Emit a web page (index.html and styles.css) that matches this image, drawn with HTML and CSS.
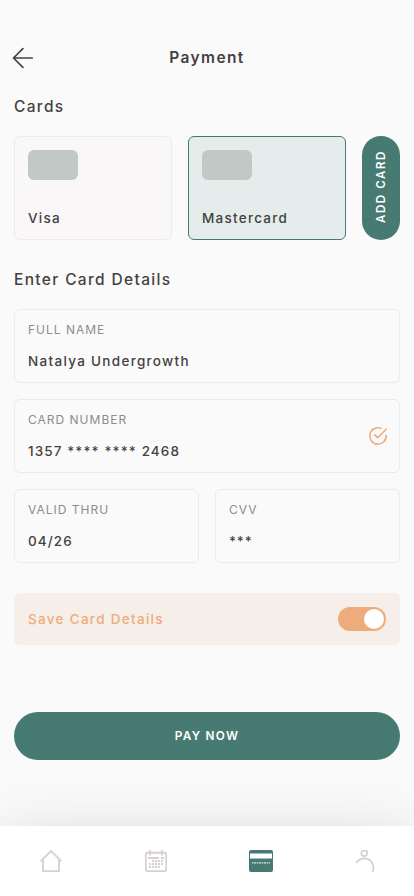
FILE: index.html
```html
<!DOCTYPE html>
<html lang="en">
<head>
<meta charset="utf-8">
<meta name="viewport" content="width=device-width, initial-scale=1">
<title>Payment</title>
<link rel="stylesheet" href="styles.css">
</head>
<body>
<div class="screen">
  <header class="header">
    <svg class="back" width="22" height="22" viewBox="0 0 22 22"><path d="M20.200 11H1.500M10.900 1.700L1.500 11l9.400 9.400"/></svg>
    <h1 class="title">Payment</h1>
  </header>
  <main class="content">
    <h2 class="heading">Cards</h2>
    <div class="cards">
      <div class="card"><span class="chip"></span><span class="card-name">Visa</span></div>
      <div class="card card-active"><span class="chip"></span><span class="card-name">Mastercard</span></div>
      <button class="add"><span class="add-text">ADD CARD</span></button>
    </div>
    <h2 class="heading details">Enter Card Details</h2>
    <div class="fields">
      <div class="field wide"><span class="label">FULL NAME</span><span class="value">Natalya Undergrowth</span></div>
      <div class="field wide">
        <span class="label">CARD NUMBER</span><span class="value number">1357 **** **** 2468</span>
        <svg class="check" width="20" height="20" viewBox="0 0 20 20"><path d="M12.900 2.300A8.200 8.200 0 1 0 18.200 9.300M6.600 8.800l3 2.900 8.600-8.400"/></svg>
      </div>
      <div class="field"><span class="label">VALID THRU</span><span class="value number">04/26</span></div>
      <div class="field"><span class="label">CVV</span><span class="value cvv">***</span></div>
    </div>
    <div class="save"><span class="save-text">Save Card Details</span><span class="toggle"><span class="knob"></span></span></div>
    <button class="pay">PAY NOW</button>
  </main>
  <nav class="nav">
    <svg class="icon" width="22" height="22" viewBox="0 0 22 22"><path d="M.6 11.300L11 .9l10.400 10.400M3 9.500v11.700h16V9.500"/></svg>
    <svg class="icon calendar" width="22" height="22" viewBox="0 0 22 22"><rect x=".75" y="2.750" width="20.500" height="18.500" rx="2"/><path d="M5 0v5.500M17 0v5.500M3 8h11M16 8h3"/><path class="dots" d="M7 11h12M4 14h15M4 17h12"/></svg>
    <svg class="icon" width="24" height="22" viewBox="0 0 24 22"><rect class="solid" width="24" height="22" rx="2"/><path class="stripe" d="M1 3.500h22v5H1z"/><path class="digits" d="M3 12.800h18"/></svg>
    <svg class="icon" width="20" height="22" viewBox="0 0 20 22"><circle cx="9.300" cy="3.300" r="2.900"/><path d="M1.300 13C5 7.500 12 7 16 11.300c2.600 2.900 3 7 1.500 10.700"/></svg>
  </nav>
</div>
</body>
</html>
```
FILE: styles.css
```css
* { box-sizing: border-box; }
body { margin: 0; background: #fafafa; color: #444142; font-family: Inter, Roboto, sans-serif; }
button { border: 0; padding: 0; font-family: inherit; color: #fff; background: #487a74; }
.screen { height: 896px; display: flex; flex-direction: column; overflow: hidden; }
.header { height: 80px; padding: 35px 12px 0; display: grid; grid-template-columns: 22px 1fr 22px; align-items: center; }
.back { fill: none; stroke: #444142; stroke-width: 1.7; stroke-linecap: round; stroke-linejoin: round; }
.title { margin: 0; text-align: center; font-size: 15.5px; line-height: 20px; font-weight: 600; letter-spacing: 1.4px; }
.content { padding: 17px 14px 0; flex: 1; }
.heading { margin: 0; height: 20px; font-size: 15.5px; line-height: 20px; font-weight: 500; letter-spacing: 1.35px; }
.details { margin-top: 30px; }
.cards { display: grid; grid-template-columns: 158px 158px 38px; gap: 16px; height: 104px; margin-top: 19px; }
.card { display: flex; flex-direction: column; justify-content: space-between; padding: 13px 13px 12px; border: 1px solid #ebebeb; border-radius: 6px; background: #f9f7f8; }
.card-active { border-color: #487a74; background: #e4edeb; }
.chip { width: 50px; height: 30px; border-radius: 6px; background: #c1c9c7; }
.card-name { font-size: 13.5px; line-height: 18px; font-weight: 500; letter-spacing: 1.26px; }
.add { display: flex; align-items: center; justify-content: center; border-radius: 19px; }
.add-text { writing-mode: vertical-rl; transform: rotate(180deg); font-size: 11.5px; line-height: 16px; font-weight: 600; letter-spacing: 1.6px; padding-top: 2px; }
.fields { display: grid; grid-template-columns: 1fr 1fr; gap: 16px; margin-top: 19px; }
.field { position: relative; display: flex; flex-direction: column; gap: 14px; height: 74px; padding: 12px 13px; border: 1px solid #ebebeb; border-radius: 6px; }
.wide { grid-column: span 2; }
.label { font-size: 12px; line-height: 16px; font-weight: 400; letter-spacing: 1px; color: #8e8c8d; }
.value { font-size: 13.5px; line-height: 18px; font-weight: 500; letter-spacing: 1.3px; }
.number { letter-spacing: 1.1px; }
.cvv { letter-spacing: .8px; }
.check { position: absolute; right: 11px; top: 26px; fill: none; stroke: #eeac7c; stroke-width: 1.6; stroke-linecap: round; stroke-linejoin: round; }
.save { display: flex; align-items: center; justify-content: space-between; height: 52px; margin-top: 30px; padding: 0 14px; border-radius: 6px; background: #f6eee9; color: #eeac7c; }
.save-text { font-size: 13.5px; line-height: 18px; font-weight: 500; letter-spacing: 1.3px; }
.toggle { display: flex; justify-content: flex-end; width: 48px; height: 24px; padding: 2px; border-radius: 12px; background: #eeac7c; }
.knob { width: 20px; height: 20px; border-radius: 50%; background: #fff; }
.pay { display: block; width: 100%; height: 48px; margin-top: 67px; border-radius: 24px; font-size: 11.75px; line-height: 16px; font-weight: 600; letter-spacing: 1.3px; }
.nav { flex: none; height: 70px; padding: 24px 39px 0 40px; display: flex; align-items: flex-start; justify-content: space-between; background: #fff; box-shadow: 0 10px 60px rgba(0, 0, 0, .15); }
.icon { fill: none; stroke: #d6d0d1; stroke-width: 1.8; }
.calendar { margin: 0 -1px 0 1px; }
.dots { stroke-width: 2; stroke-dasharray: 2 1; }
.solid { fill: #487a74; stroke: none; }
.stripe { fill: #fff; stroke: none; }
.digits { stroke: #dce7e5; stroke-width: 1.3; stroke-dasharray: 1.500 .7 2 .7; }
```
